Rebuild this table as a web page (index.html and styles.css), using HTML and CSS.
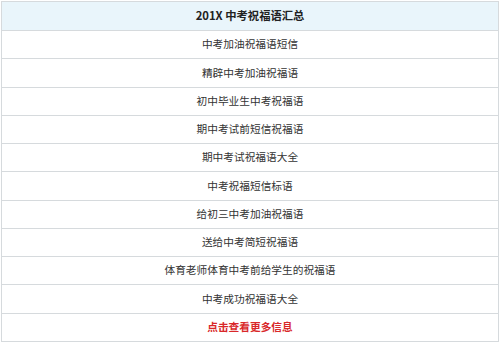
FILE: index.html
```html
<!DOCTYPE html>
<html lang="zh">
<head>
<meta charset="utf-8">
<title>201X 中考祝福语汇总</title>
<link rel="stylesheet" href="styles.css">
</head>
<body>
<div class="table">
  <div class="row head">201X 中考祝福语汇总</div>
  <div class="row">中考加油祝福语短信</div>
  <div class="row">精辟中考加油祝福语</div>
  <div class="row">初中毕业生中考祝福语</div>
  <div class="row">期中考试前短信祝福语</div>
  <div class="row">期中考试祝福语大全</div>
  <div class="row">中考祝福短信标语</div>
  <div class="row">给初三中考加油祝福语</div>
  <div class="row">送给中考简短祝福语</div>
  <div class="row">体育老师体育中考前给学生的祝福语</div>
  <div class="row">中考成功祝福语大全</div>
  <div class="row more">点击查看更多信息</div>
</div>
</body>
</html>
```
FILE: styles.css
```css
html, body {
  margin: 0;
  padding: 0;
  background: #ffffff;
}
body {
  padding: 1px 2px 0 1px;
  font-family: "Noto Sans CJK SC", "Liberation Sans", sans-serif;
}
.table {
  width: 496px;
  border: 1px solid #d6dadd;
  display: flex;
  flex-direction: column;
}
.row {
  height: 27.27px;
  border-top: 1px solid #d6dadd;
  display: flex;
  align-items: center;
  justify-content: center;
  font-size: 10.7px;
  color: #333333;
  line-height: 1;
}
.row.head {
  height: 28px;
  border-top: none;
  background: #e9f5fb;
  font-weight: bold;
  color: #222222;
  font-size: 11.3px;
}
.row.more {
  color: #d9282a;
  font-weight: bold;
}
```
